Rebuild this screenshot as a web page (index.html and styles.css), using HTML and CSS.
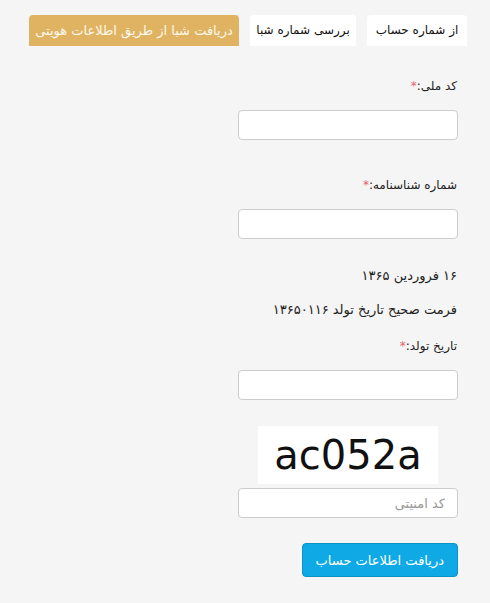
FILE: index.html
```html
<!DOCTYPE html>
<html lang="fa" dir="rtl">
<head>
<meta charset="utf-8">
<link rel="stylesheet" href="styles.css">
</head>
<body>

<ul class="tabs">
	<li class="tab account">از شماره حساب</li>
	<li class="tab sheba">بررسی شماره شبا</li>
	<li class="tab identity active">دریافت شبا از طریق اطلاعات هویتی</li>
</ul>

<form class="form">
	<label class="label first">کد ملی:<span class="req">*</span></label>
	<input class="input" type="text">

	<label class="label second">شماره شناسنامه:<span class="req">*</span></label>
	<input class="input" type="text">

	<p class="note date">۱۶ فروردین ۱۳۶۵</p>
	<p class="note">فرمت صحیح تاریخ تولد ۱۳۶۵۰۱۱۶</p>

	<label class="label third">تاریخ تولد:<span class="req">*</span></label>
	<input class="input" type="text">

	<div class="captcha"><span>ac052a</span></div>
	<input class="input" type="text" placeholder="کد امنیتی">

	<div class="actions">
		<button class="button" type="button">دریافت اطلاعات حساب</button>
	</div>
</form>

</body>
</html>
```

FILE: styles.css
```css
body {
  margin: 0;
  background-color: #f5f5f5;
  font-family: "DejaVu Sans", "Noto Sans", sans-serif;
  font-size: 13px;
  color: #222;
}

.tabs {
  display: flex;
  list-style: none;
  margin: 15px 0 0;
  padding: 0 23px 0 0;
  gap: 11px;
}

.tab {
  flex-shrink: 0;
  white-space: nowrap;
  background-color: #fff;
  height: 31px;
  line-height: 31px;
  text-align: center;
  border-radius: 4px 4px 0 0;
  font-size: 12px;
  color: #111;
}

.tab.account {
  width: 100px;
}

.tab.sheba {
  width: 106px;
}

.tab.identity {
  width: 210px;
  font-size: 13px;
}

.tab.active {
  background-color: #dfb361;
  color: #fdf7ea;
}

.form {
  display: flex;
  flex-direction: column;
  width: 220px;
  margin-right: 32px;
}

.label {
  display: block;
  line-height: 20px;
  font-size: 12px;
  padding-right: 1px;
  margin: 0 0 14px;
}

.label.first {
  margin-top: 30px;
}

.label.second {
  margin-top: 35px;
}

.label.third {
  margin-top: 2px;
}

.req {
  color: #e8606b;
}

.input {
  box-sizing: border-box;
  width: 220px;
  height: 30px;
  border: 1px solid #ccc;
  border-radius: 4px;
  background: #fff;
  padding: 0 12px;
  font-family: inherit;
  font-size: 13px;
  outline: none;
}

.input::placeholder {
  color: #999;
}

.note {
  margin: 0 0 14px;
  line-height: 20px;
  font-size: 13px;
  padding-right: 1px;
}

.note.date {
  margin-top: 27px;
}

.captcha {
  align-self: center;
  width: 180px;
  height: 58px;
  margin: 26px 0 4px;
  background: #fff;
  display: flex;
  align-items: center;
  justify-content: center;
  direction: ltr;
}

.captcha span {
  font-family: "DejaVu Sans", sans-serif;
  font-size: 40px;
  color: #111;
}

.actions {
  display: flex;
  margin-top: 25px;
}

.button {
  background-color: #0faae5;
  border: 1px solid #0b93c8;
  border-radius: 4px;
  color: #fff;
  font-family: inherit;
  font-size: 13px;
  height: 34px;
  padding: 0 13px;
  cursor: pointer;
}
```
